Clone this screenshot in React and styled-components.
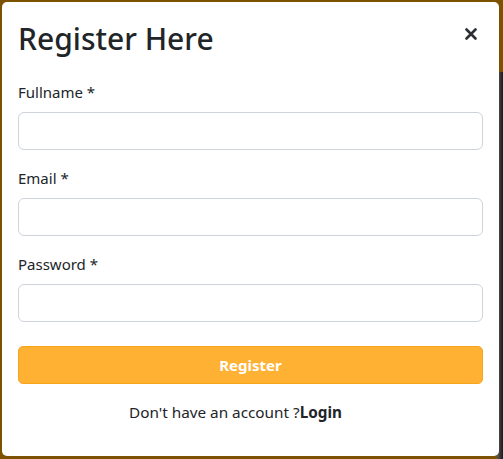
import styled, { createGlobalStyle } from "styled-components";

const GlobalStyle = createGlobalStyle`
  html, body {
    margin: 0;
    padding: 0;
  }
  body {
    width: 503px;
    height: 459px;
    overflow: hidden;
    background:
      linear-gradient(#7c5100, #7c5100) left top / 100% 72px no-repeat,
      linear-gradient(to right, #7c5100 0, #7c5100 497px, #5a5a5a 497px, #1a1a1a 503px);
    font-family: "Noto Sans", "Open Sans", sans-serif;
    color: #212529;
  }
`;

const Modal = styled.div`
  box-sizing: border-box;
  margin: 2px 0 0 2px;
  width: 497px;
  height: 454px;
  background: #fff;
  border-radius: 5px;
  display: flex;
  flex-direction: column;
`;

const Header = styled.div`
  display: flex;
  align-items: center;
  justify-content: space-between;
  padding: 16px 16px 0 16px;
  height: 58px;
  box-sizing: border-box;
`;

const Title = styled.h1`
  margin: 0;
  font-size: 30px;
  font-weight: 500;
  line-height: 38px;
`;

const Close = styled.button`
  border: 0;
  background: none;
  padding: 0;
  width: 24px;
  height: 24px;
  margin-right: 0;
  margin-top: -10px;
  display: flex;
  align-items: center;
  justify-content: center;
  cursor: pointer;
  color: #2b2f33;
`;

const Body = styled.form`
  padding: 20px 16px 0 16px;
  display: flex;
  flex-direction: column;
`;

const Group = styled.div`
  display: flex;
  flex-direction: column;
  margin-bottom: 16px;
`;

const Label = styled.label`
  font-size: 15px;
  line-height: 24px;
  margin-bottom: 8px;
`;

const Input = styled.input`
  box-sizing: border-box;
  height: 38px;
  width: 100%;
  border: 1px solid #ced4da;
  border-radius: 6px;
  padding: 6px 12px;
  font-size: 16px;
  font-family: inherit;
`;

const Submit = styled.button`
  margin-top: 8px;
  height: 38px;
  width: 100%;
  border: 1px solid #f7a61c;
  border-radius: 5px;
  background: #ffb133;
  color: #fff;
  font-family: inherit;
  font-size: 15px;
  font-weight: 700;
  cursor: pointer;
`;

const Footer = styled.p`
  margin: 16px 0 0 0;
  padding-right: 30px;
  text-align: center;
  font-size: 15.3px;
  line-height: 24px;
  b {
    font-weight: 700;
  }
`;

const fields = ["Fullname", "Email", "Password"];

function App() {
  return (
    <>
      <GlobalStyle />
      <Modal>
        <Header>
          <Title>Register Here</Title>
          <Close aria-label="Close">
            <svg width="12" height="12" viewBox="0 0 12 12">
              <path
                d="M1.5 1.5L10.5 10.5M10.5 1.5L1.5 10.5"
                stroke="currentColor"
                strokeWidth="2.6"
                strokeLinecap="round"
              />
            </svg>
          </Close>
        </Header>
        <Body onSubmit={(e) => e.preventDefault()}>
          {fields.map((f) => (
            <Group key={f}>
              <Label>{f} *</Label>
              <Input type={f === "Password" ? "password" : "text"} />
            </Group>
          ))}
          <Submit type="submit">Register</Submit>
          <Footer>
            Don't have an account ?<b>Login</b>
          </Footer>
        </Body>
      </Modal>
    </>
  );
}

export default App;
